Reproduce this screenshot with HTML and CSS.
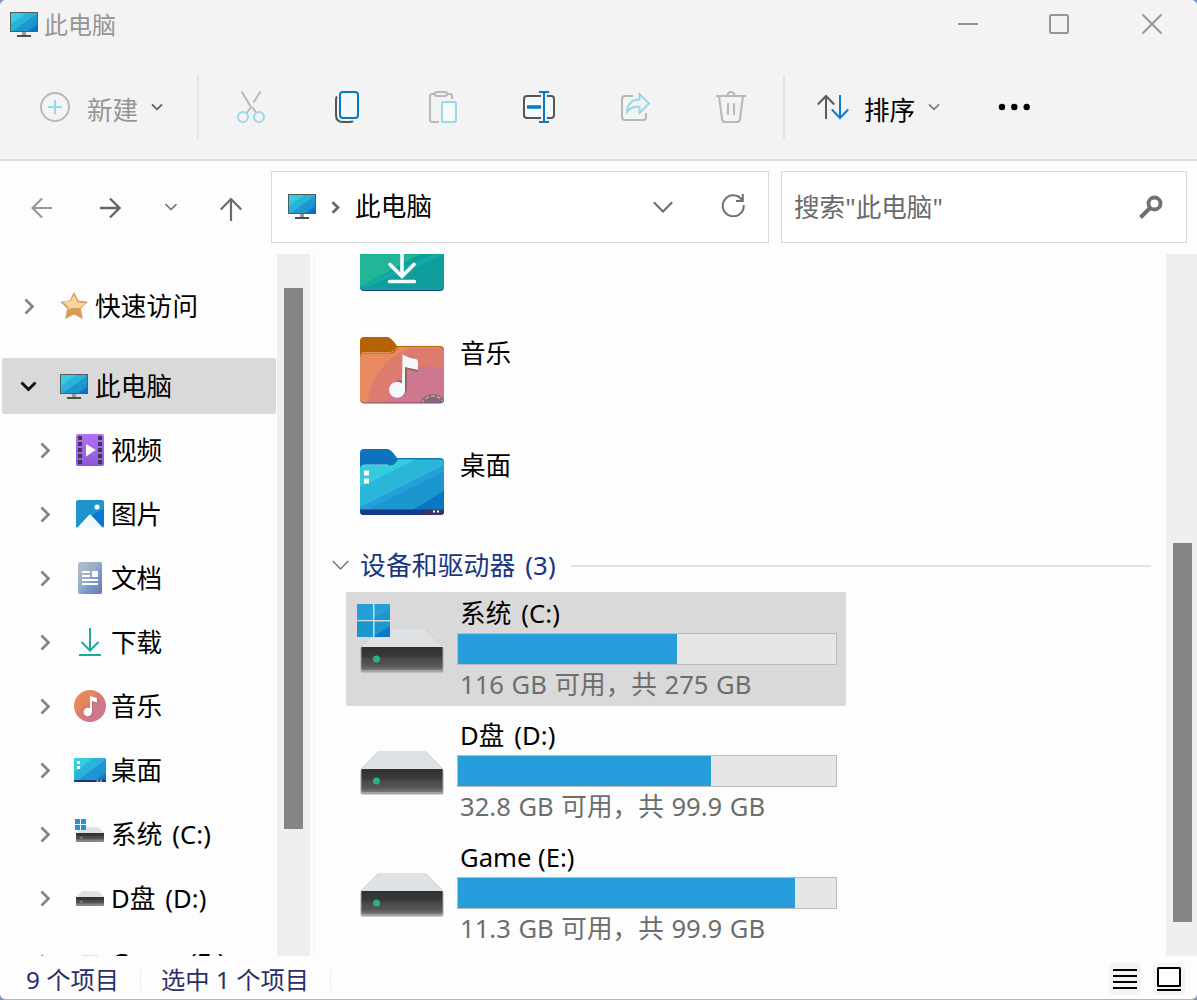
FILE: index.html
```html
<!DOCTYPE html>
<html lang="zh-CN">
<head>
<meta charset="utf-8">
<title>此电脑</title>
<link rel="stylesheet" href="styles.css">
</head>
<body>
<svg class="defs" width="0" height="0" aria-hidden="true">
  <defs>
    <linearGradient id="g-screen" x1="0" y1="0" x2="1" y2="1">
      <stop offset="0" stop-color="#3bd3e0"/><stop offset=".3" stop-color="#34c8de"/>
      <stop offset=".32" stop-color="#29b5da"/><stop offset=".52" stop-color="#29b0da"/>
      <stop offset=".54" stop-color="#1f97d0"/><stop offset=".78" stop-color="#1c94ce"/>
      <stop offset=".84" stop-color="#0d76c4"/><stop offset="1" stop-color="#0b6dbb"/>
    </linearGradient>
    <linearGradient id="g-body" x1="0" y1="0" x2="0" y2="1">
      <stop offset="0" stop-color="#303030"/><stop offset=".4" stop-color="#3a3a3a"/>
      <stop offset=".5" stop-color="#484848"/><stop offset=".8" stop-color="#555"/><stop offset="1" stop-color="#777"/>
    </linearGradient>
    <linearGradient id="g-video" x1="0" y1="0" x2="0" y2="1">
      <stop offset="0" stop-color="#b070f4"/><stop offset=".55" stop-color="#9e63ea"/><stop offset="1" stop-color="#855bd0"/>
    </linearGradient>
    <linearGradient id="g-play" x1="0" y1="0" x2="1" y2="1"><stop offset=".4" stop-color="#fff"/><stop offset="1" stop-color="#cfcbd8"/></linearGradient>
    <linearGradient id="g-doc" x1="0" y1="0" x2="1" y2="1">
      <stop offset="0" stop-color="#b3c0ca"/><stop offset=".45" stop-color="#98adc6"/>
      <stop offset=".6" stop-color="#7b9bcb"/><stop offset="1" stop-color="#6679b4"/>
    </linearGradient>
    <linearGradient id="g-music" x1="0" y1="0" x2="1" y2="1">
      <stop offset=".1" stop-color="#ea8860"/><stop offset=".4" stop-color="#e6845f"/>
      <stop offset=".42" stop-color="#dc7b6e"/><stop offset=".56" stop-color="#db7a72"/>
      <stop offset=".6" stop-color="#ce778e"/><stop offset="1" stop-color="#ce778e"/>
    </linearGradient>
    <clipPath id="c-folder"><path d="M0 20q0-3 3-3.500h28q3 0 5-3l2-3h42q4 0 4 4v47.500q0 4-4 4H4q-4 0-4-4z"/></clipPath>
    <g id="monitor">
      <rect x=".5" y="1.500" width="27" height="19" fill="url(#g-screen)" stroke="#535b60"/>
      <path d="M12 21h4v3h-4z" fill="#9a9a9a"/><path d="M7 24h14v2H7z" fill="#4a4f52"/>
    </g>
    <g id="drive">
      <path d="M18.500 0h47L83 18H1z" fill="#dfe2e5"/><path d="M1 18L18.500.5M83 18L65.500.5" stroke="#cbcdd0" fill="none"/>
      <rect x=".5" y="18" width="83" height="25.500" rx="2" fill="#a3a3a3"/>
      <path d="M1.500 18h81v21q0 2-2 2h-77q-2 0-2-2z" fill="url(#g-body)"/>
      <circle cx="16.500" cy="30" r="3.500" fill="#20b87c"/><circle cx="15.500" cy="30.500" r="1.300" fill="#838383"/>
    </g>
    <g id="drive-small">
      <path d="M6 0h16l6 6H0z" fill="#dfe2e5"/><rect y="6" width="28" height="9" rx="1" fill="#858585"/>
      <path d="M0 6h28v7H0z" fill="url(#g-body)"/><path d="M5.500 9v3M4 10.500h3" stroke="#20b87c"/>
    </g>
    <g id="winlogo">
      <path d="M0 0h16v16H0zM17.500 0H33v16H17.500zM0 17.500h16V33H0z" fill="#269edb"/>
      <path d="M0 17.500h16V33H0zM33 5v11H17.500v-2z" fill="#1d96ce"/>
      <path d="M17.500 17.500H33V33H17.500z" fill="#1d96ce"/><path d="M33 22v11H17.500v-1z" fill="#0a78d2"/>
    </g>
    <g id="chev"><path d="M1.500 1.500l7 7-7 7" fill="none" stroke="#858585" stroke-width="2.700"/></g>
  </defs>
</svg>

<div class="window">
  <header class="titlebar">
    <svg class="pc" width="28" height="27"><use href="#monitor"/></svg>
    <h1 class="title">此电脑</h1>
    <div class="controls">
      <svg width="22" height="22"><path d="M2 11h20" stroke="#959595" stroke-width="2"/></svg>
      <svg width="22" height="22"><rect x="2" y="2" width="18" height="18" rx="1.500" fill="none" stroke="#959595" stroke-width="2"/></svg>
      <svg width="22" height="22"><path d="M1.500 1.500l19 19M20.500 1.500l-19 19" stroke="#959595" stroke-width="1.800"/></svg>
    </div>
  </header>

  <div class="toolbar">
    <div class="new">
      <svg width="32" height="32" fill="none" stroke-width="2"><circle cx="16" cy="16" r="14" stroke="#b8b8b8"/><path d="M16 9v14M9 16h14" stroke="#99d8ec"/></svg>
      <span>新建</span>
      <svg width="12" height="8" fill="none" stroke="#5c5c5c" stroke-width="1.700"><path d="M1 1.300l5 5 5-5"/></svg>
    </div>
    <i class="sep"></i>
    <div class="actions">
      <svg width="32" height="34" fill="none" stroke="#b8b8b8" stroke-width="2"><path d="M6.500 1.500L16 17M25.500 1.500L18.500 12.500M16 17l-4.500 6.500M17 17l4.500 6"/><g stroke="#99d8ec"><circle cx="8" cy="27" r="5"/><circle cx="24" cy="27" r="5"/></g></svg>
      <svg width="32" height="34" fill="none" stroke-width="2"><path d="M6 6.500q-1 1-1 3V25q0 7 7 7h7q2 0 3-1" stroke="#555"/><rect x="9" y="2" width="18" height="26" rx="3" fill="#f5f9fb" stroke="#0878c4"/></svg>
      <svg width="32" height="34" fill="none" stroke="#b8b8b8" stroke-width="2"><path d="M8 4H5q-2 0-2 2v24q0 2 2 2h7M20 4h3q2 0 2 2v3M10 2h8q2 0 2 2t-2 2h-8q-2 0-2-2t2-2z"/><rect x="15" y="12" width="14" height="20" rx="1.500" fill="#f7f9fa" stroke="#99d8ec"/></svg>
      <svg width="32" height="34" fill="none" stroke="#555" stroke-width="2"><path d="M18 6H4Q1 6 1 9v16q0 3 3 3h14" fill="#f3f9fc"/><path d="M24 6h4q3 0 3 3v16q0 3-3 3h-4" fill="#f3f9fc"/><g stroke="#0878c4"><path d="M16 2h10M16 32h10M21 2v30"/><path d="M4 17h14" stroke-width="3.500"/></g></svg>
      <svg width="32" height="34" fill="none" stroke="#b8b8b8" stroke-width="2"><path d="M14 6H6Q3 6 3 9v18q0 3 3 3h18q3 0 3-3v-4"/><path d="M20.500 4l9.500 9.500-9.500 9.500v-6q-8-1-12.500 5Q9 9.500 20.500 9.500z" stroke="#99d8ec"/></svg>
      <svg width="32" height="34" fill="none" stroke="#b8b8b8" stroke-width="2"><path d="M1 6h30M4 6l3 23q.4 3 3 3h12q2.600 0 3-3l3-23M12.500 6q0-4 3.500-4t3.500 4M13 13v12M19 13v12"/></svg>
    </div>
    <i class="sep"></i>
    <div class="sort">
      <svg width="32" height="26" fill="none" stroke-width="2"><path d="M9 25V2M.8 10.500L9 2l8.200 8.500" stroke="#5b5b5b"/><path d="M23 1v23M14.800 15.500L23 24l8.200-8.500" stroke="#0a7fd0"/></svg>
      <span>排序</span>
      <svg width="12" height="8" fill="none" stroke="#7a7a7a" stroke-width="1.700"><path d="M1 1.300l5 5 5-5"/></svg>
    </div>
    <svg class="more" width="32" height="8"><circle cx="4" cy="4" r="3.200"/><circle cx="16.300" cy="4" r="3.200"/><circle cx="28.700" cy="4" r="3.200"/></svg>
  </div>

  <div class="navbar">
    <svg class="back" width="22" height="22" fill="none" stroke="#989898" stroke-width="2.200"><path d="M21 11H2M11 1.500L1.500 11l9.500 9.500"/></svg>
    <svg class="fwd" width="22" height="22" fill="none" stroke="#666" stroke-width="2.400"><path d="M1 11h19M11 1.500l9.500 9.500-9.500 9.500"/></svg>
    <svg class="recent" width="12" height="8" fill="none" stroke="#7a7a7a" stroke-width="1.700"><path d="M.5 1l5.500 5.500L11.500 1"/></svg>
    <svg class="up" width="22" height="24" fill="none" stroke="#6b6b6b" stroke-width="2.200"><path d="M11 24V2M.8 12.500L11 2l10.200 10.500"/></svg>
    <div class="address">
      <svg class="pc" width="28" height="27"><use href="#monitor"/></svg>
      <svg class="crumb" width="9" height="13" fill="none" stroke="#686868" stroke-width="2.800"><path d="M1.500 1.200L7 6.500l-5.500 5.300"/></svg>
      <span>此电脑</span>
      <svg class="drop" width="20" height="12" fill="none" stroke="#666b6e" stroke-width="2"><path d="M.8 1.200L10 10.500l9.200-9.300"/></svg>
      <svg class="refresh" width="24" height="24" fill="none" stroke="#707070" stroke-width="2"><path d="M21 7A10.500 10.500 0 1 0 22.700 12M21.800 1v7H15"/></svg>
    </div>
    <div class="search">
      <span>搜索"此电脑"</span>
      <svg width="24" height="24" fill="none" stroke="#6f7273"><circle cx="15.500" cy="8.500" r="6" stroke-width="3.900"/><path d="M11.500 12.500L1.500 22.500" stroke-width="4"/></svg>
    </div>
  </div>

  <main class="main">
    <nav class="tree">
      <div class="node top"><svg class="chev" width="11" height="17"><use href="#chev"/></svg>
        <svg class="ico" width="32" height="32"><path d="M16 2l4.300 8.600 9.500 1.200-7 6.600 2 10.600L16 24.500 7.200 29l2-10.600-7-6.600 9.500-1.200z" fill="#d99a58"/><path d="M16 5l3.500 7 8 1.300-6 4.700q-8-1-11.500 1.500l.5-2.500-6-5.300 8-.7z" fill="#fad3a2"/></svg>
        <span>快速访问</span></div>
      <div class="node top selected"><svg class="chev open" width="17" height="11" fill="none" stroke="#111" stroke-width="2.900"><path d="M1.500 1.500l7 7 7-7"/></svg>
        <svg class="ico" width="32" height="32"><use href="#monitor" x="2" y="3"/></svg><span>此电脑</span></div>
      <div class="node"><svg class="chev" width="11" height="17"><use href="#chev"/></svg>
        <svg class="ico" width="32" height="32"><rect x="2" width="28" height="32" rx="2" fill="url(#g-video)"/><path d="M6 2v30M26 2v30" stroke="#3e3850" stroke-width="4" stroke-dasharray="4 2"/><path d="M12 10l10 6-10 6.500z" fill="url(#g-play)"/></svg><span>视频</span></div>
      <div class="node"><svg class="chev" width="11" height="17"><use href="#chev"/></svg>
        <svg class="ico" width="32" height="32"><rect x="2" y="2" width="28" height="28" rx="2" fill="#1b95cc"/><path d="M30 11v17L24 30H6L14 19z" fill="#0b76d1"/><path d="M3 30L15 17q1-1 2 0l12 13z" fill="#f4fafc"/><circle cx="23" cy="9" r="2.600" fill="#fff"/></svg><span>图片</span></div>
      <div class="node"><svg class="chev" width="11" height="17"><use href="#chev"/></svg>
        <svg class="ico" width="32" height="32"><rect x="4" width="24" height="32" rx="2" fill="url(#g-doc)"/><path d="M8 10h8M8 14h8M8 18h16M8 22h16" stroke="#fff" stroke-width="2"/><path d="M18 9h6v6h-6z" fill="#fff"/></svg><span>文档</span></div>
      <div class="node"><svg class="chev" width="11" height="17"><use href="#chev"/></svg>
        <svg class="ico" width="32" height="32" fill="none" stroke="#1bab9c" stroke-width="2"><path d="M16 2v22M7.500 16l8.500 8.500 8.500-8.500M5 29h22"/></svg><span>下载</span></div>
      <div class="node"><svg class="chev" width="11" height="17"><use href="#chev"/></svg>
        <svg class="ico" width="32" height="32"><circle cx="16" cy="16" r="16" fill="url(#g-music)"/><path d="M17 6.500l7 2v5l-5-1.500v11a4.200 4 0 1 1-2-3.500z" fill="#8a5a5a" opacity=".45"/><path d="M16 6l7 2v4.500L18 11v11a4.200 4.200 0 1 1-2-3.500z" fill="#fff"/></svg><span>音乐</span></div>
      <div class="node"><svg class="chev" width="11" height="17"><use href="#chev"/></svg>
        <svg class="ico" width="32" height="32"><rect y="4" width="32" height="24" rx="1" fill="url(#g-screen)"/><path d="M0 26h32v1.500l-1 .5H1l-1-.5z" fill="#1c327e"/><path d="M22.500 27h2M26 27h2" stroke="#fff"/><path d="M3 7h3v3H3zM3 12h3v3H3z" fill="#fff"/></svg><span>桌面</span></div>
      <div class="node"><svg class="chev" width="11" height="17"><use href="#chev"/></svg>
        <svg class="ico" width="32" height="32"><use href="#drive-small" x="2" y="9"/><g transform="translate(1 1) scale(.333)"><path d="M0 0h33v33H0z" fill="#f5fafc"/><path d="M0 0h15v15H0zM18 0h15v15H18zM0 18h15v15H0zM18 18h15v15H18z" fill="#1d96d3"/></g></svg><span class="spaced">系统 (C:)</span></div>
      <div class="node"><svg class="chev" width="11" height="17"><use href="#chev"/></svg>
        <svg class="ico" width="32" height="32"><use href="#drive-small" x="2" y="9"/></svg><span class="spaced">D盘 (D:)</span></div>
      <div class="node"><svg class="chev" width="11" height="17"><use href="#chev"/></svg>
        <svg class="ico" width="32" height="32"><use href="#drive-small" x="2" y="9"/></svg><span>Game (E:)</span></div>
    </nav>
    <div class="scroll left"><div class="thumb"></div></div>
    <section class="content">
      <div class="folder">
        <svg width="84" height="67"><path d="M0 4q0-4 4-4h23q4 0 10 10h43q4 0 4 4v48q0 4-4 4H4q-4 0-4-4z" fill="#1f3f86"/><path d="M0 16h84v46q0 3-4 3H4q-4 0-4-3z" fill="#0f9e9c"/><path d="M0 16h84L0 62z" fill="#22b598"/><path d="M84 24v6L2 64v-4z" fill="#12aaa6"/><path d="M42 16v35M30 39.500l12 12 12-12M29.500 56.500h25" stroke="#f4fafc" stroke-width="3.600" stroke-linecap="round" fill="none"/></svg>
        <span>下载</span>
      </div>
      <div class="folder">
        <svg width="84" height="67"><path d="M0 4q0-4 4-4h23q4 0 10 9h43q4 0 4 4v49q0 4-4 4H4q-4 0-4-4z" fill="#b36304"/>
          <g clip-path="url(#c-folder)"><rect width="84" height="67" fill="#e98961"/><circle cx="73" cy="73" r="66" fill="#dc7b6e"/><circle cx="70" cy="72" r="43" fill="#ce778e"/><circle cx="73" cy="71" r="14" fill="#8c6670"/><circle cx="73" cy="71" r="12" fill="none" stroke="#aaa1a4" stroke-width="2" stroke-dasharray="4 2"/><path d="M69 64.500h10" stroke="#8058d8" stroke-width="1.500"/></g>
          <path d="M1 17q1-1.500 3-1.500h25q3 0 5-2l3-3h43" stroke="#d39c56" fill="none"/><path d="M1 64q1 2 3 2h76q3 0 4-2" stroke="#765565" fill="none"/>
          <path d="M44 21l14 5v9l-11-3v20a8 8 0 1 1-3-7z" fill="#8f6263"/><path d="M42.500 17.500q7 4 13.500 4.500 2 1 2 3v8L45 30v21.500a8 8 0 1 1-3-5z" fill="#f5f8fa"/></svg>
        <span>音乐</span>
      </div>
      <div class="folder last">
        <svg width="84" height="67"><path d="M0 4q0-4 4-4h23q4 0 10 9h43q4 0 4 4v49q0 4-4 4H4q-4 0-4-4z" fill="#0e73bd"/>
          <g clip-path="url(#c-folder)"><rect width="84" height="67" fill="#29b6d9"/><path d="M0 10h57L0 38z" fill="#34cbdd"/><path d="M84 16v51H0V58z" fill="#269edb"/><path d="M84 22v45H8v-7z" fill="#1c96ce"/><path d="M84 42v20H51z" fill="#0b76c3"/><path d="M0 60.500h84v6H0z" fill="#153a86"/><path d="M60 65l6-4h18v6z" fill="#413363"/></g>
          <path d="M4 21.500h5v5H4zM4 29.500h5v5H4zM73 61.500h2v2h-2zM77 61.500h2v2h-2z" fill="#fff"/><path d="M1 18q1-2 4-2h23" stroke="#8bd9e9" fill="none"/></svg>
        <span>桌面</span>
      </div>
      <div class="group">
        <svg width="17" height="11" fill="none" stroke="#777" stroke-width="1.500"><path d="M.8 1l7.700 8L16.200 1"/></svg>
        <h2>设备和驱动器 (3)</h2><i class="rule"></i>
      </div>
      <div class="tiles">
        <div class="tile selected">
          <svg width="111" height="114"><use href="#drive" x="14" y="37"/><use href="#winlogo" x="11" y="12"/></svg>
          <div class="info"><span class="name spaced">系统 (C:)</span><div class="bar"><div class="fill" style="width:57.9%"></div></div><span class="free">116 GB 可用，共 275 GB</span></div>
        </div>
        <div class="tile">
          <svg width="111" height="114"><use href="#drive" x="14" y="37"/></svg>
          <div class="info"><span class="name spaced">D盘 (D:)</span><div class="bar"><div class="fill" style="width:66.9%"></div></div><span class="free">32.8 GB 可用，共 99.9 GB</span></div>
        </div>
        <div class="tile">
          <svg width="111" height="114"><use href="#drive" x="14" y="37"/></svg>
          <div class="info"><span class="name">Game (E:)</span><div class="bar"><div class="fill" style="width:89.2%"></div></div><span class="free">11.3 GB 可用，共 99.9 GB</span></div>
        </div>
      </div>
    </section>
    <div class="scroll right"><div class="thumb"></div></div>
  </main>

  <footer class="status">
    <span class="count">9 个项目</span><i></i><span class="picked">选中 1 个项目</span><i></i>
    <div class="views">
      <svg width="32" height="32" stroke="#000" stroke-width="2"><path d="M4 7h24M4 13h24M4 19h24M4 25h24"/></svg>
      <svg width="32" height="32" fill="#fff" stroke="#000" stroke-width="2"><rect x="5" y="5" width="22" height="18" rx=".5"/><path d="M4 27h24"/></svg>
    </div>
  </footer>
</div>
</body>
</html>
```
FILE: styles.css
```css
* { box-sizing: border-box; }
body {
  margin: 0;
  background: #7d93b8;
  font: 25.6px/32px "Noto Sans", "Noto Sans CJK SC", sans-serif;
  color: #000;
}
svg { display: block; flex: none; }
span, h1, h2 { white-space: nowrap; }
h1, h2 { margin: 0; font-weight: 400; }
.defs { position: absolute; }
.window {
  height: 1000px;
  display: flex;
  flex-direction: column;
  background: #fdfdfd;
  border-bottom: 1px solid #b5b5b5;
  border-radius: 6px;
  overflow: hidden;
}
.spaced { word-spacing: 3px; letter-spacing: .1px; }

.titlebar { height: 48px; display: flex; align-items: center; padding-left: 10px; background: #f3f3f3; }
.title { margin: 1px 0 0 6px; font-size: 24px; color: #959595; }
.controls { margin-left: auto; margin-right: 34px; display: flex; gap: 70px; }
.controls svg:last-child { margin-left: 1px; }

.toolbar {
  height: 113px;
  display: flex;
  align-items: center;
  padding: 7px 0 0 39px;
  background: #f3f3f3;
  border-bottom: 2px solid #dedede;
}
.new, .sort { display: flex; align-items: center; }
.new { width: 158px; color: #959595; }
.new span { margin: 8px 13px 0 16px; }
.sep { width: 2px; height: 64px; background: #e4e4e4; }
.actions { display: grid; grid-template-columns: repeat(6, 96px); justify-items: center; margin: 0 4px; }
.sort { margin-left: 32px; }
.sort span { margin: 8px 13px 0 15px; }
.more { margin-left: 58px; }

.navbar { height: 93px; flex: none; display: flex; align-items: center; padding: 0 10px 1px 31px; }
.back, .fwd { margin-top: 2px; }
.fwd { margin-left: 46px; }
.recent { margin-left: 44px; }
.up { margin: 3px 29px 0 43px; }
.address, .search { height: 72px; display: flex; align-items: center; border: 1px solid #d9d9d9; background: #fff; }
.address { width: 498px; padding: 0 23px 0 16px; letter-spacing: .2px; }
.address .pc { margin-top: -2px; }
.crumb { margin: 1px 15px 0 15px; }
.drop { margin: -1px 48px 0 auto; }
.refresh { margin-top: -4px; }
.search { flex: 1; margin-left: 12px; padding: 0 23px 0 12px; color: #6b6b6b; justify-content: space-between; }
.search span { margin-top: 1px; }

.main { height: 702px; flex: none; display: flex; overflow: hidden; }
.tree { width: 277px; padding-top: 20px; }
.node { height: 64px; display: flex; align-items: center; padding-left: 40px; }
.node span { margin-top: 2px; }
.node .ico { margin-left: 23px; margin-right: 5px; }
.node.top { padding-left: 24px; letter-spacing: .2px; }
.node.selected { height: 56px; margin: 20px 1px 4px 2px; padding-left: 18px; background: #d9d9d9; border-radius: 2px; }
.node.selected .ico { margin-left: 21px; }
.scroll { background: #efefef; }
.thumb { width: 19px; margin-left: 7px; background: #858585; }
.left { width: 33px; }
.left .thumb { height: 541px; margin-top: 34px; }
.right { width: 31px; }
.right .thumb { height: 379px; margin-top: 289px; }
.content { flex: 1; margin: -29px 0 0 3px; border-left: 2px solid #f7f7f7; padding-left: 15px; }
.folder { height: 112px; display: flex; gap: 16px; padding-left: 30px; }
.folder span { margin-top: 1px; }
.folder.last { height: 96px; }
.group { height: 40px; display: flex; align-items: center; padding: 0 15px 0 2px; }
.group h2 { margin-left: 11px; font-size: 25.8px; color: #17367f; word-spacing: 3px; letter-spacing: .1px; }
.rule { flex: 1; height: 2px; margin: 1px 0 0 15px; background: #e3e3e3; }
.tiles { display: grid; gap: 8px; margin: 7px 0 0 16px; }
.tile { width: 500px; height: 114px; display: flex; border-radius: 2px; }
.tile.selected { background: #d9d9d9; }
.info { padding-top: 6px; }
.name, .free { display: block; padding-left: 3px; }
.bar { width: 380px; height: 32px; margin: 3px 0 4px; border: 1px solid #bababa; background: #e6e6e6; }
.fill { height: 100%; background: #269edc; }
.free { color: #6d6d6d; word-spacing: 1px; }

.status { flex: 1; display: flex; align-items: center; padding: 4px 12px 0 26px; font-size: 24.3px; color: #2a2f67; }
.status i { width: 1px; height: 22px; background: #eee; }
.count { width: 114px; }
.picked { width: 169px; margin-left: 20px; }
.views { margin-left: auto; margin-top: -2px; display: flex; gap: 12px; }
.views svg { background: #f4f4f4; border-radius: 4px; }
```
